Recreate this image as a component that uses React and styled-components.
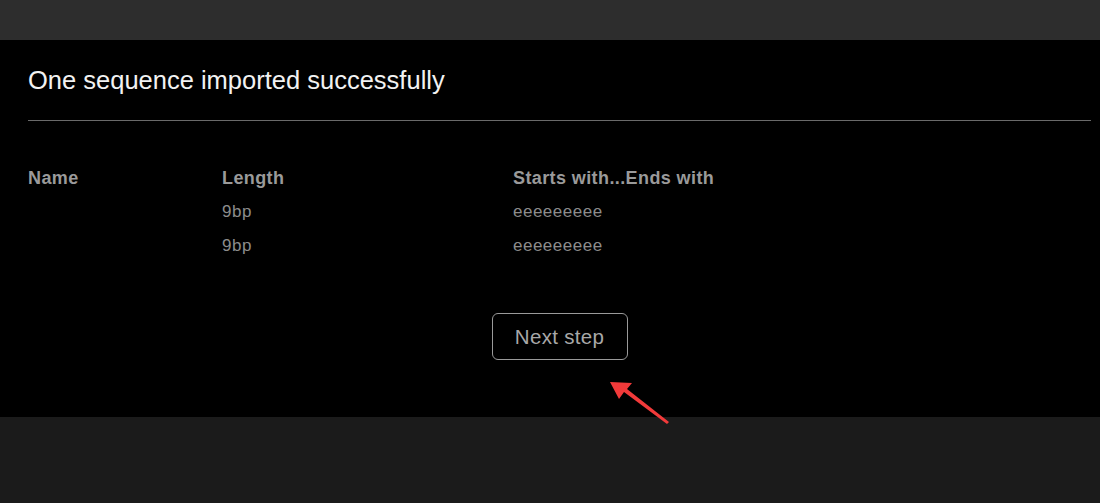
import React from "react";
import styled, { createGlobalStyle } from "styled-components";

const GlobalStyle = createGlobalStyle`
  html, body {
    margin: 0;
    padding: 0;
    background: #1b1b1b;
    font-family: "Liberation Sans", Arial, sans-serif;
  }
`;

const Page = styled.div`
  position: relative;
  width: 1100px;
  height: 503px;
  display: flex;
  flex-direction: column;
  background: #1b1b1b;
  overflow: hidden;
`;

const TopBar = styled.div`
  height: 40px;
  background: #2d2d2d;
`;

const Panel = styled.div`
  height: 377px;
  background: #000;
  padding: 0 9px 0 28px;
  display: flex;
  flex-direction: column;
`;

const Title = styled.h2`
  margin: 0;
  height: 80px;
  display: flex;
  align-items: center;
  font-size: 25.5px;
  font-weight: 400;
  color: #f2f2f2;
  border-bottom: 1px solid #6a6a6a;
`;

const Table = styled.div`
  margin-top: 40px;
  display: grid;
  grid-template-columns: 194px 291px 1fr;
  grid-auto-rows: 34px;
  align-items: center;
`;

const Head = styled.div`
  font-size: 18px;
  font-weight: 700;
  letter-spacing: 0.4px;
  color: #9a9a9a;
`;

const Cell = styled.div`
  font-size: 17px;
  letter-spacing: 0.5px;
  color: #8c8c8c;
`;

const Actions = styled.div`
  display: flex;
  justify-content: center;
  margin-top: 50px;
`;

const Button = styled.button`
  width: 136px;
  height: 47px;
  background: transparent;
  border: 1px solid #9a9a9a;
  border-radius: 6px;
  color: #a8a8a8;
  font-family: inherit;
  font-size: 20.5px;
  letter-spacing: 0.3px;
  cursor: pointer;
`;

const Arrow = styled.svg`
  position: absolute;
  left: 605px;
  top: 376px;
`;

const rows = [
  { name: "", length: "9bp", seq: "eeeeeeeee" },
  { name: "", length: "9bp", seq: "eeeeeeeee" },
];

export default function App() {
  return (
    <>
      <GlobalStyle />
      <Page>
        <TopBar />
        <Panel>
          <Title>One sequence imported successfully</Title>
          <Table>
            <Head>Name</Head>
            <Head>Length</Head>
            <Head>Starts with...Ends with</Head>
            {rows.map((r, i) => (
              <React.Fragment key={i}>
                <Cell>{r.name}</Cell>
                <Cell>{r.length}</Cell>
                <Cell>{r.seq}</Cell>
              </React.Fragment>
            ))}
          </Table>
          <Actions>
            <Button>Next step</Button>
          </Actions>
        </Panel>
        <Arrow width="70" height="52" viewBox="0 0 70 52">
          <path d="M5 6 L27 7 L22 13 L64 46 L62 48 L19 16 L14 23 Z" fill="#f23a3a" />
        </Arrow>
      </Page>
    </>
  );
}
